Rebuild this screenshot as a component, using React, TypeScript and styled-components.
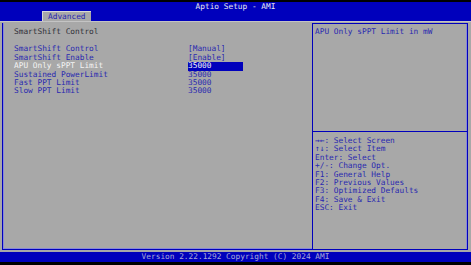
import * as React from "react";
import styled, { createGlobalStyle } from "styled-components";

const BLUE = "#0000bc";
const GRAY = "#a8a8a8";
const TEXT_BLUE = "#2828b0";

const GlobalStyle = createGlobalStyle`
  html, body {
    margin: 0;
    padding: 0;
    background: #000;
  }
  body {
    font-family: "DejaVu Sans Mono", "Liberation Mono", monospace;
    font-size: 7.8px;
  }
`;

const Screen = styled.div`
  width: 471px;
  height: 265px;
  background: #000;
  padding-top: 2px;
  box-sizing: border-box;
  display: flex;
  flex-direction: column;
  overflow: hidden;
`;

const Header = styled.div`
  height: 19px;
  background: ${BLUE};
  display: flex;
  flex-direction: column;
  justify-content: space-between;
`;

const Title = styled.div`
  color: #e8e8f0;
  text-align: center;
  line-height: 8px;
  padding-top: 1px;
`;

const TabRow = styled.div`
  display: flex;
  padding-left: 42px;
`;

const Tab = styled.div`
  background: ${GRAY};
  color: ${TEXT_BLUE};
  height: 10px;
  line-height: 10px;
  padding: 0 5px;
  box-sizing: border-box;
  border-top: 1px solid #d8d8d8;
  border-left: 1px solid #d8d8d8;
`;

const Body = styled.div`
  height: 231px;
  background: ${GRAY};
  border-top: 1px solid #c4c4c4;
  box-sizing: border-box;
  display: grid;
  grid-template-columns: 310px 156px;
  padding: 1px 3px 2px 2px;
`;

const MainPanel = styled.div`
  border-left: 1px solid ${BLUE};
  border-bottom: 1px solid ${BLUE};
  box-shadow: inset 1px 0 0 #8888d8, inset 0 -1px 0 #8888d8;
  padding: 5px 0 0 11px;
  display: flex;
  flex-direction: column;
  gap: 9px;
`;

const SideLine = styled.div`
  line-height: 8.4px;
  white-space: pre;
`;

const Heading = styled(SideLine)`
  color: #303038;
`;

const ItemList = styled.div`
  display: flex;
  flex-direction: column;
`;

const Row = styled.div`
  display: grid;
  grid-template-columns: 174px 55px;
  line-height: 8.4px;
  white-space: pre;
`;

const Label = styled.span<{ $active?: boolean }>`
  color: ${(p) => (p.$active ? "#f4f4f4" : TEXT_BLUE)};
`;

const Value = styled.span<{ $active?: boolean }>`
  color: ${(p) => (p.$active ? "#f4f4f4" : TEXT_BLUE)};
  background: ${(p) => (p.$active ? BLUE : "transparent")};
`;

const HelpPanel = styled.div`
  border: 1px solid ${BLUE};
  box-shadow: inset -1px 0 0 #8888d8;
  display: flex;
  flex-direction: column;
`;

const HelpTop = styled.div`
  height: 103px;
  padding: 4px 0 0 2px;
  color: ${TEXT_BLUE};
  border-bottom: 1px solid ${BLUE};
`;

const HelpKeys = styled.div`
  padding: 5px 0 0 2px;
  color: ${TEXT_BLUE};
  display: flex;
  flex-direction: column;
`;

const Footer = styled.div`
  height: 10px;
  background: ${BLUE};
  color: #a8a8d8;
  text-align: center;
  line-height: 10px;
`;

const items = [
  { label: "SmartShift Control", value: "[Manual]" },
  { label: "SmartShift Enable", value: "[Enable]" },
  { label: "APU Only sPPT Limit", value: "35000", active: true },
  { label: "Sustained PowerLimit", value: "35000" },
  { label: "Fast PPT Limit", value: "35000" },
  { label: "Slow PPT Limit", value: "35000" },
];

const keys = [
  "\u2192\u2190: Select Screen",
  "\u2191\u2193: Select Item",
  "Enter: Select",
  "+/-: Change Opt.",
  "F1: General Help",
  "F2: Previous Values",
  "F3: Optimized Defaults",
  "F4: Save & Exit",
  "ESC: Exit",
];

export default function App() {
  return (
    <Screen>
      <GlobalStyle />
      <Header>
        <Title>Aptio Setup - AMI</Title>
        <TabRow>
          <Tab>Advanced</Tab>
        </TabRow>
      </Header>
      <Body>
        <MainPanel>
          <Heading>SmartShift Control</Heading>
          <ItemList>
            {items.map((it) => (
              <Row key={it.label}>
                <Label $active={it.active}>{it.label}</Label>
                <Value $active={it.active}>{it.value}</Value>
              </Row>
            ))}
          </ItemList>
        </MainPanel>
        <HelpPanel>
          <HelpTop>
            <SideLine>APU Only sPPT Limit in mW</SideLine>
          </HelpTop>
          <HelpKeys>
            {keys.map((k) => (
              <SideLine key={k}>{k}</SideLine>
            ))}
          </HelpKeys>
        </HelpPanel>
      </Body>
      <Footer>Version 2.22.1292 Copyright (C) 2024 AMI</Footer>
    </Screen>
  );
}
